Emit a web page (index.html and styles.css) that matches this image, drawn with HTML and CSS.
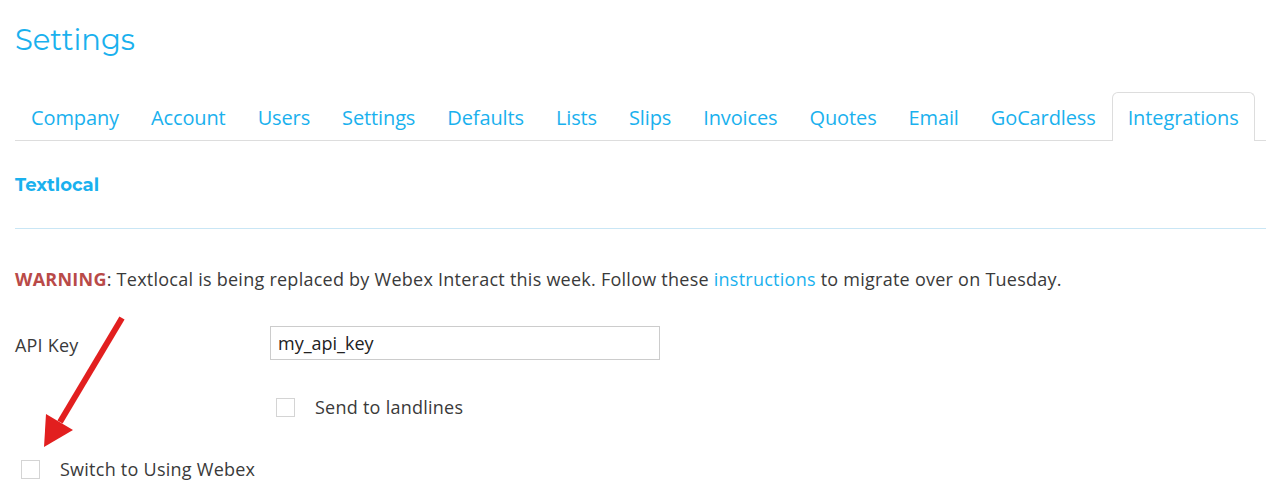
FILE: index.html
```html
<!DOCTYPE html>
<html>
<head>
<meta charset="utf-8">
<link rel="stylesheet" href="styles.css">
</head>
<body>
<div class="page">
  <h1 class="title">Settings</h1>
  <ul class="tabs">
    <li class="tab">Company</li>
    <li class="tab">Account</li>
    <li class="tab">Users</li>
    <li class="tab">Settings</li>
    <li class="tab">Defaults</li>
    <li class="tab">Lists</li>
    <li class="tab">Slips</li>
    <li class="tab">Invoices</li>
    <li class="tab">Quotes</li>
    <li class="tab">Email</li>
    <li class="tab">GoCardless</li>
    <li class="tab active">Integrations</li>
  </ul>
  <h3 class="section">Textlocal</h3>
  <div class="rule"></div>
  <p class="warning"><b class="warn">WARNING</b>: Textlocal is being replaced by Webex Interact this week. Follow these <a class="link">instructions</a> to migrate over on Tuesday.</p>
  <div class="form">
    <label class="label">API Key</label>
    <div class="input">my_api_key</div>
    <div></div>
    <div class="check"><span class="box"></span><span>Send to landlines</span></div>
  </div>
  <div class="check switch"><span class="box"></span><span>Switch to Using Webex</span></div>
</div>
<svg class="arrow" width="140" height="200" viewBox="0 0 140 200">
  <line x1="122" y1="318" x2="60" y2="422" stroke="#e21f1f" stroke-width="6" transform="translate(0,-300)"/>
  <polygon points="44,447 46,414 73,430" fill="#e21f1f" transform="translate(0,-300)"/>
</svg>
</body>
</html>
```
FILE: styles.css
```css
html, body { margin: 0; padding: 0; background: #fff; }
body { font-family: "Open Sans", "Noto Sans", sans-serif; color: #3a3a3a; position: relative; }
.page { padding: 0 0 0 15px; }
.title {
  margin: 0; padding-top: 22px; height: 70px; box-sizing: border-box;
  font-family: "Montserrat", "Lato", sans-serif; font-weight: 400; font-size: 29px; color: #1ab1ee;
  line-height: 36px;
}
.tabs {
  list-style: none; margin: 22px 0 0; padding: 0; display: flex;
  border-bottom: 1px solid #dddddd; height: 48px;
}
.tab {
  padding: 0 15px; font-size: 20px; color: #1ab1ee; line-height: 50px; height: 48px; letter-spacing: -0.12px;
  box-sizing: border-box; border: 1px solid transparent; border-bottom: 0;
}
.tab.active {
  border-color: #dddddd; border-radius: 6px 6px 0 0; background: #fff; height: 49px; margin-bottom: -1px;
}
.section {
  margin: 32px 0 0; font-family: "Montserrat", "Lato", sans-serif; font-weight: 700; font-size: 18px;
  color: #1ab1ee; line-height: 24px;
}
.rule { margin-top: 31px; border-top: 1px solid #c9e6f5; }
.warning { margin: 37px 0 0; font-size: 18px; line-height: 26px; letter-spacing: 0.25px; }
.warn { color: #b94a48; font-weight: 700; }
.link { color: #1ab1ee; }
.form {
  margin-top: 34px; display: grid; grid-template-columns: 255px 390px; row-gap: 35px; align-items: center;
}
.label { font-size: 18px; letter-spacing: 0.2px; padding-top: 4px; }
.input {
  height: 34px; box-sizing: border-box; border: 1px solid #cccccc; padding: 0 7px;
  font-size: 18px; line-height: 32px; color: #222;
}
.check { display: flex; align-items: center; gap: 20px; font-size: 18px; padding-left: 6px; letter-spacing: 0.25px; }
.box { width: 19px; height: 19px; border: 1px solid #d4d4d4; box-sizing: border-box; display: inline-block; }
.switch { margin-top: 38px; }
.arrow { position: absolute; left: 0; top: 300px; }
```
